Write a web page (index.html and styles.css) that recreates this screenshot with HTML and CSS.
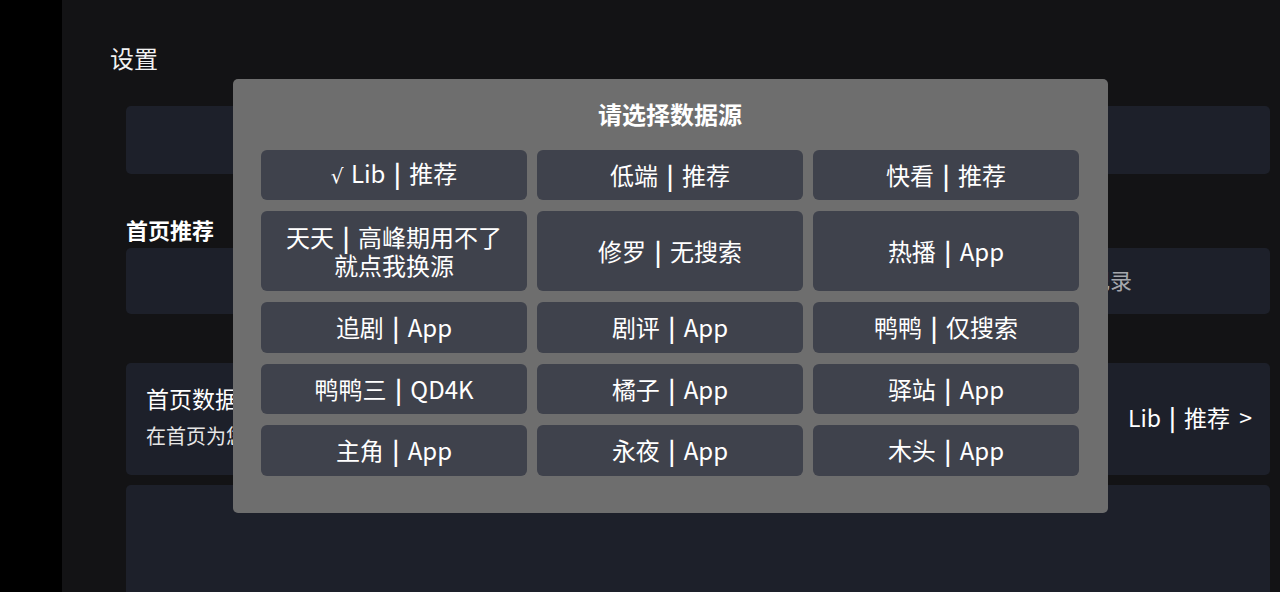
FILE: index.html
```html
<!DOCTYPE html>
<html lang="zh-CN">
<head>
<meta charset="utf-8">
<title>设置</title>
<link rel="stylesheet" href="styles.css">
</head>
<body>
<div class="rail"></div>
<main class="main">
  <h1 class="page-title">设置</h1>
  <section class="card card-a"></section>
  <h2 class="section-title">首页推荐</h2>
  <section class="card card-b"><span class="muted">历史记录</span></section>
  <section class="card card-c">
    <div class="info">
      <div class="info-title">首页数据源</div>
      <div class="info-sub">在首页为您展示数据源内容</div>
    </div>
    <div class="value">Lib <span class="sep">|</span> 推荐 <span class="arrow">&gt;</span></div>
  </section>
  <section class="card card-d"></section>
</main>

<div class="dialog">
  <div class="dialog-title">请选择数据源</div>
  <div class="grid">
    <div class="opt"><span class="label"><span class="check">√</span> Lib <span class="sep">|</span> 推荐</span></div>
    <div class="opt"><span class="label">低端 <span class="sep">|</span> 推荐</span></div>
    <div class="opt"><span class="label">快看 <span class="sep">|</span> 推荐</span></div>
    <div class="opt"><span class="label">天天 <span class="sep">|</span> 高峰期用不了<br>就点我换源</span></div>
    <div class="opt"><span class="label">修罗 <span class="sep">|</span> 无搜索</span></div>
    <div class="opt"><span class="label">热播 <span class="sep">|</span> App</span></div>
    <div class="opt"><span class="label">追剧 <span class="sep">|</span> App</span></div>
    <div class="opt"><span class="label">剧评 <span class="sep">|</span> App</span></div>
    <div class="opt"><span class="label">鸭鸭 <span class="sep">|</span> 仅搜索</span></div>
    <div class="opt"><span class="label">鸭鸭三 <span class="sep">|</span> QD4K</span></div>
    <div class="opt"><span class="label">橘子 <span class="sep">|</span> App</span></div>
    <div class="opt"><span class="label">驿站 <span class="sep">|</span> App</span></div>
    <div class="opt"><span class="label">主角 <span class="sep">|</span> App</span></div>
    <div class="opt"><span class="label">永夜 <span class="sep">|</span> App</span></div>
    <div class="opt"><span class="label">木头 <span class="sep">|</span> App</span></div>
  </div>
</div>
</body>
</html>
```

FILE: styles.css
```css
* { box-sizing: border-box; }
html, body { margin: 0; padding: 0; }
body {
  width: 1280px;
  height: 592px;
  overflow: hidden;
  background: #000;
  display: flex;
  font-family: "Noto Sans CJK SC", "Noto Sans", sans-serif;
  color: #fff;
}
.rail { width: 62px; flex: none; background: #000; }
.main {
  flex: 1;
  height: 592px;
  overflow: hidden;
  background: #131315;
  padding: 43px 10px 0 64px;
  display: flex;
  flex-direction: column;
}
.page-title {
  margin: 0 0 33px -16px;
  font-size: 24px;
  line-height: 30px;
  font-weight: 400;
  color: #f2f2f2;
}
.card {
  background: #1d202a;
  border-radius: 5px;
  flex: none;
}
.card-a { height: 68px; }
.section-title {
  margin: 40px 0 0 0;
  font-size: 22px;
  line-height: 30px;
  font-weight: 700;
  color: #fff;
}
.card-b {
  height: 66px;
  margin-top: 4px;
  display: flex;
  align-items: center;
  justify-content: flex-end;
  padding: 0 138px 4px 0;
}
.muted { font-size: 22px; line-height: 28px; color: #a5a7ad; }
.card-c {
  height: 112px;
  margin-top: 49px;
  display: flex;
  align-items: flex-start;
  justify-content: space-between;
  padding: 20px 18px 0 20px;
}
.info-title { font-size: 23px; line-height: 30px; }
.info-sub { font-size: 20px; line-height: 28px; margin-top: 9px; color: #e6e6e6; }
.value { font-size: 23px; line-height: 30px; margin-top: 19px; }
.arrow { margin-left: 4px; }
.card-d { height: 140px; margin-top: 10px; }

.sep { font-weight: 700; margin: 0 3px; }
.check { font-family: "DejaVu Sans", sans-serif; font-size: 20px; margin-right: 2px; }

.dialog {
  position: absolute;
  left: 233px;
  top: 79px;
  width: 875px;
  height: 434px;
  background: #6e6e6e;
  border-radius: 5px;
  padding: 20px 29px 37px 28px;
}
.dialog-title {
  text-align: center;
  font-size: 24px;
  line-height: 30px;
  font-weight: 700;
  margin-bottom: 21px;
}
.grid {
  display: grid;
  grid-template-columns: repeat(3, 266px);
  grid-template-rows: 50px 80px 51px 50px 51px;
  column-gap: 10px;
  row-gap: 11px;
}
.opt {
  background: #3f424c;
  border-radius: 6px;
  padding: 0 10px 1px;
  display: flex;
  align-items: center;
  justify-content: center;
  color: #fff;
}
.label {
  display: block;
  font-size: 24px;
  line-height: 28px;
  text-align: center;
}
```
